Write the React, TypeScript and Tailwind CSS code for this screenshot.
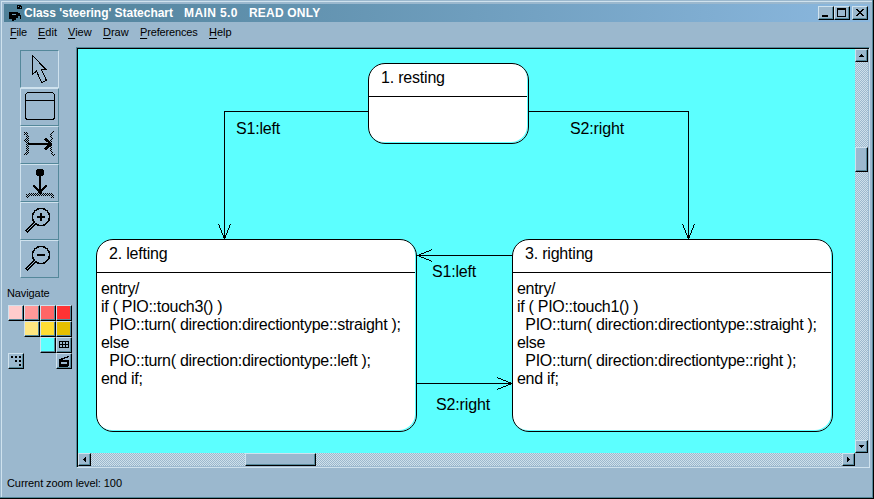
import React from "react";

const RAISED =
  "border border-t-[#cfe2ee] border-l-[#cfe2ee] border-r-black border-b-black shadow-[inset_-1px_-1px_0_#54889a] bg-[#9bb8ce]";
const TRACK =
  "bg-[repeating-conic-gradient(#9bb8ce_0_25%,#cfe0ea_0_50%)] bg-[length:2px_2px]";

function Svg({ w, h, children }: { w: number; h: number; children: React.ReactNode }) {
  return (
    <svg
      width={w}
      height={h}
      viewBox={`0 0 ${w} ${h}`}
      shapeRendering="crispEdges"
      fill="none"
      stroke="#000"
      className="block shrink-0"
    >
      {children}
    </svg>
  );
}

function AppIcon() {
  return (
    <Svg w={13} h={18}>
      <g fill="#000" stroke="none">
        <path d="M8 1h4v1h1v3h-5zM0 8h9v1h2v2h1v4h-1v-3h-2v2h-2v2h-2v1h-2v-2h-3z" />
        <path d="M9 2h1v1h-1zM11 3h1v1h-1zM3 10h4v1h-4z" fill="#6f9bb3" />
      </g>
    </Svg>
  );
}

function TitleButton({ kind }: { kind: "min" | "max" | "close" }) {
  return (
    <div className={`h-[14px] w-4 ${RAISED}`}>
      <Svg w={14} h={12}>
        {kind === "min" && <path d="M3 9h6" strokeWidth="2" />}
        {kind === "max" && <path d="M2.5 1.5h8v8h-8zM2 2.5h9" />}
        {kind === "close" && (
          <path
            fill="#000"
            stroke="none"
            d="M3 2h2v1h1v1h2v-1h1v-1h2v1h-1v1h-1v1h-1v1h1v1h1v1h1v1h-2v-1h-1v-1h-2v1h-1v1h-2v-1h1v-1h1v-1h1v-1h-1v-1h-1v-1h-1z"
          />
        )}
      </Svg>
    </div>
  );
}

const MENU: [string, string][] = [
  ["File", "w-7 tracking-[-0.2px]"],
  ["Edit", "w-[30px]"],
  ["View", "w-[35px]"],
  ["Draw", "w-[37px]"],
  ["Preferences", "w-[69px] tracking-[-0.15px]"],
  ["Help", "w-10"],
];

function Magnifier({ plus }: { plus?: boolean }) {
  return (
    <>
      <circle cx="20" cy="14" r="8.500" strokeWidth="1.400" />
      <path d="M16 14h8" strokeWidth="2" />
      {plus && <path d="M20 10v8" strokeWidth="2" />}
      <path d="M14 20l-9 9" strokeWidth="4" />
      <path d="M13.500 20.500l-8 8" stroke="#9bb8ce" strokeWidth="1" />
    </>
  );
}

const TOOLS: React.ReactNode[] = [
  <path d="M11.500 4.500v19l4-3.500 5 11.500 5-2-5-11h4.500z" />,
  <>
    <rect x="4.500" y="3.500" width="29" height="27" rx="3" />
    <path d="M5 11.500h28" />
  </>,
  <>
    <path d="M7 17h23" strokeWidth="2" />
    <path d="M24 11.500l6 5.500-6 5.500" strokeWidth="2.500" />
    <g fill="url(#stipple)" stroke="none">
      <path d="M3 5h3v1h1v3h1v17h-1v2h-4v-2h2v-11h-1v-1h-1v-2h2v-4h-2z" />
      <path d="M34 5h-2v1h-1v4h1v3h-1v11h1v3h2v2h-2v-1h-2v-3h-1v-12h1v-2h-1v-4h1v-2h2v-1h2z" />
    </g>
  </>,
  <>
    <circle cx="19" cy="7.500" r="4" fill="#000" stroke="none" />
    <path d="M19 8v20" strokeWidth="2" />
    <path d="M12.500 20.500l6.500 7 6.500-7" strokeWidth="2.300" />
    <path d="M7 28h24v1h2v4h-3v-2h-22v2h-3v-4h2z" fill="url(#stipple)" stroke="none" />
  </>,
  <Magnifier plus />,
  <Magnifier />,
];

function Tool({ active, children }: { active: boolean; children: React.ReactNode }) {
  return (
    <div
      className={`h-[38px] w-[39px] border ${
        active
          ? "border-t-[#54889a] border-l-[#54889a] border-r-[#cfe2ee] border-b-[#cfe2ee]"
          : "border-t-[#cfe2ee] border-l-[#cfe2ee] border-r-[#54889a] border-b-[#54889a]"
      }`}
    >
      <Svg w={37} h={36}>
        <defs>
          <pattern id="stipple" width="2" height="2" patternUnits="userSpaceOnUse">
            <path d="M0 0h1v1h-1zM1 1h1v1h-1z" fill="#000" stroke="none" />
          </pattern>
        </defs>
        {children}
      </Svg>
    </div>
  );
}

function Swatch({ color = "bg-[#9bb8ce]", children }: { color?: string; children?: React.ReactNode }) {
  return (
    <div className="size-4 border border-t-[#cfe2ee] border-l-[#cfe2ee] border-r-black border-b-black">
      <div className={`size-[14px] border-r border-b border-[#54889a] ${color}`}>{children}</div>
    </div>
  );
}

function ScrollButton({ dir }: { dir: "up" | "down" | "left" | "right" }) {
  const d = {
    up: "M5 4h1v1h1v1h1v1h-5v-1h1v-1h1z",
    down: "M3 4h5v1h-1v1h-1v1h-1v-1h-1v-1h-1z",
    left: "M6 3h1v5h-1v-1h-1v-1h-1v-1h1v-1h1z",
    right: "M4 3h1v1h1v1h1v1h-1v1h-1v1h-1z",
  }[dir];
  return (
    <div className={`size-[13px] shrink-0 ${RAISED}`}>
      <Svg w={11} h={11}>
        <path d={d} fill="#000" stroke="none" />
      </Svg>
    </div>
  );
}

function StateBox({ place, title, lines }: { place: string; title: string; lines?: string[] }) {
  return (
    <div
      className={`absolute rounded-[17px] border border-black bg-white shadow-[inset_-1px_-1px_0_#5cffff] ${place}`}
    >
      <div className="mr-px h-[33px] border-b border-black pl-3 pt-[5px] leading-[18px] tracking-[-0.2px]">{title}</div>
      {lines && (
        <div className="pl-1 pt-[7px] leading-[18px]">
          {lines.map((l) => (
            <div key={l} className="tracking-[-0.29px]">
              {l}
            </div>
          ))}
        </div>
      )}
    </div>
  );
}

export default function App() {
  return (
    <div className="flex h-[499px] w-[874px] flex-col overflow-hidden border-r border-b border-black bg-[#9bb8ce] font-['Liberation_Sans',Arial,sans-serif] text-black">
      <div className="flex h-[498px] flex-col border-r border-b border-[#54889a] pl-px pt-px">
        <div className="flex h-[496px] flex-col border-t border-l border-[#cfe2ee] pl-[2px] pt-[2px]">
          <header className="flex h-[18px] w-[866px] items-center bg-linear-to-r from-[#4e8098] to-[#8bb8df] pl-[5px] pr-[2px]">
            <AppIcon />
            <div className="flex grow whitespace-pre pl-[2px] text-[12px] font-bold leading-[18px] text-white">
              <span className="w-[160px] tracking-[-0.03px]">Class 'steering' Statechart</span>
              <span className="w-[65px] tracking-[0.4px]">MAIN 5.0</span>
              <span className="tracking-[0.2px]">READ ONLY</span>
            </div>
            <TitleButton kind="min" />
            <TitleButton kind="max" />
            <div className="w-[2px]" />
            <TitleButton kind="close" />
          </header>

          <nav className="flex h-[25px] pl-[6px] pt-[2px] text-[11px] leading-4">
            {MENU.map(([m, w]) => (
              <div key={m} className={w}>
                <span className="underline underline-offset-2">{m[0]}</span>
                {m.slice(1)}
              </div>
            ))}
          </nav>

          <div className="flex h-[421px]">
            <aside className="flex w-[72px] shrink-0 flex-col pt-[3px]">
              <div className="ml-4">
                {TOOLS.map((t, i) => (
                  <Tool key={i} active={i === 0}>
                    {t}
                  </Tool>
                ))}
              </div>
              <div className="mt-[9px] h-[18px] pl-[3px] text-[11px] leading-[13px] tracking-[-0.1px]">Navigate</div>
              <div className="ml-1 grid w-16 grid-cols-4">
                <Swatch color="bg-[#ffcccc]" />
                <Swatch color="bg-[#ff9999]" />
                <Swatch color="bg-[#ff6666]" />
                <Swatch color="bg-[#ff3333]" />
                <div />
                <Swatch color="bg-[#ffe680]" />
                <Swatch color="bg-[#ffdd33]" />
                <Swatch color="bg-[#e6bf00]" />
                <div />
                <div />
                <Swatch color="bg-[#5cffff]" />
                <Swatch>
                  <Svg w={13} h={13}>
                    <path d="M2.500 3.500h9v6h-9zM2 6.500h10M5.500 3v7M8.500 3v7" />
                  </Svg>
                </Swatch>
                <Swatch>
                  <Svg w={13} h={13}>
                    <path d="M2 3h2M6 3h2M10 3h2M6 7h2M10 7h2M10 11h2" strokeWidth="2" />
                  </Svg>
                </Swatch>
                <div />
                <div />
                <Swatch>
                  <Svg w={13} h={13}>
                    <path
                      d="M2 5h2v-1h3v-1h3v-1h2v1h-1v1h-3v1h-2v1h6v6h-1v1h-9v-7z"
                      fill="#000"
                      stroke="none"
                    />
                    <path d="M4 8h6v2h-6z" fill="#9bb8ce" stroke="none" />
                  </Svg>
                </Swatch>
              </div>
            </aside>

            <section className="h-[421px] w-[794px] shrink-0 border border-t-[#54889a] border-l-[#54889a] border-r-[#cfe2ee] border-b-[#cfe2ee]">
              <div className="flex h-[419px] flex-col border-t border-l border-black">
                <div className="flex h-[404px]">
                  <main className="relative h-[404px] w-[777px] shrink-0 overflow-hidden bg-[#5cffff] text-[16px] whitespace-pre">
                    <StateBox place="left-[290px] top-[14px] h-[81px] w-[161px]" title="1. resting" />
                    <StateBox
                      place="left-[18px] top-[190px] h-[193px] w-[321px]"
                      title="2. lefting"
                      lines={[
                        "entry/",
                        "if ( PIO::touch3() )",
                        "  PIO::turn( direction:directiontype::straight );",
                        "else",
                        "  PIO::turn( direction:directiontype::left );",
                        "end if;",
                      ]}
                    />
                    <StateBox
                      place="left-[434px] top-[190px] h-[193px] w-[321px]"
                      title="3. righting"
                      lines={[
                        "entry/",
                        "if ( PIO::touch1() )",
                        "  PIO::turn( direction:directiontype::straight );",
                        "else",
                        "  PIO::turn( direction:directiontype::right );",
                        "end if;",
                      ]}
                    />
                    <div className="absolute left-0 top-0">
                      <Svg w={777} h={404}>
                        <path d="M290 62.500H146.500V190M140.500 175l6 15 6-15" />
                        <path d="M451 62.500H610.500V190M604.500 175l6 15 6-15" />
                        <path d="M434 206.500H339M354.500 200.500l-15 6 15 6" />
                        <path d="M339 334.500H434M419 328.500l15 6-15 6" />
                      </Svg>
                    </div>
                    <span className="absolute left-[158px] top-[71px] leading-[18px] tracking-[-0.2px]">S1:left</span>
                    <span className="absolute left-[492px] top-[71px] leading-[18px] tracking-[-0.15px]">S2:right</span>
                    <span className="absolute left-[354px] top-[214px] leading-[18px] tracking-[-0.2px]">S1:left</span>
                    <span className="absolute left-[358px] top-[347px] leading-[18px] tracking-[-0.15px]">S2:right</span>
                  </main>
                  <div className={`flex h-[404px] w-[13px] flex-col ${TRACK}`}>
                    <ScrollButton dir="up" />
                    <div className={`mt-[85px] h-[25px] ${RAISED}`} />
                    <div className="grow" />
                    <ScrollButton dir="down" />
                  </div>
                </div>
                <div className={`flex h-[13px] w-[777px] ${TRACK}`}>
                  <ScrollButton dir="left" />
                  <div className={`ml-[154px] w-[71px] ${RAISED}`} />
                  <div className="grow" />
                  <ScrollButton dir="right" />
                </div>
              </div>
            </section>
          </div>

          <footer className="pl-[3px] pt-[8px] text-[11px] leading-[14px] tracking-[-0.08px]">Current zoom level: 100</footer>
        </div>
      </div>
    </div>
  );
}
